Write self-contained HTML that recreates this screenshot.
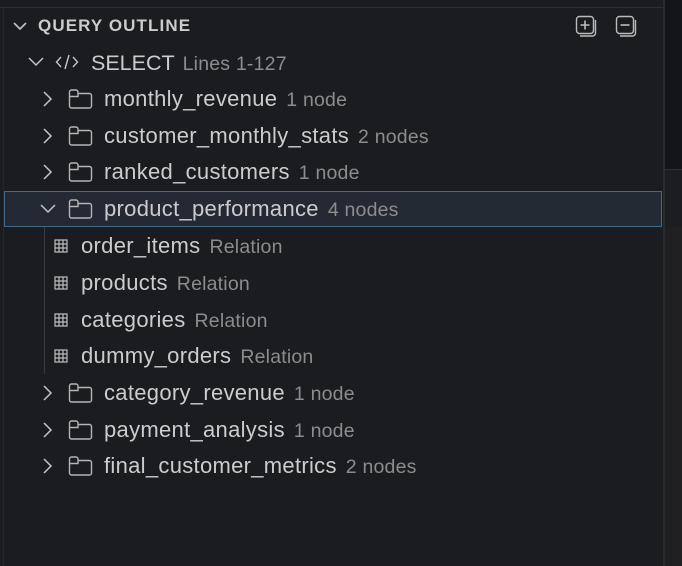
<!DOCTYPE html>
<html><head><style>
body{margin:0;width:682px;height:566px;background:#1b1c1f;overflow:hidden;position:relative;font-family:"Liberation Sans",sans-serif;}
.a{position:absolute;white-space:nowrap}
.t{color:#cccccc;font-size:22px;line-height:24px;letter-spacing:0.3px}
.s{color:#8c8c8c;font-size:19.5px;margin-left:9px;letter-spacing:0.2px}
svg{position:absolute}
</style></head><body>
<div class="a" style="left:0;top:7px;width:663px;height:1px;background:#2b2c2f"></div>
<div class="a" style="left:3px;top:8px;width:1px;height:558px;background:#26272a"></div>
<div class="a" style="left:663px;top:0;width:2px;height:566px;background:#2a2b2d"></div>
<div class="a" style="left:665px;top:0;width:17px;height:169px;background:#141518"></div>
<div class="a" style="left:665px;top:169px;width:17px;height:1px;background:#2e2f31"></div>
<div class="a" style="left:665px;top:170px;width:17px;height:57px;background:#1c1d20"></div>
<div class="a" style="left:665px;top:227px;width:17px;height:339px;background:#202022"></div>

<svg style="left:12px;top:18px" width="16" height="16"><path d="M2 5 L8 11 L14 5" stroke="#c5c5c5" stroke-width="1.6" fill="none"/></svg>
<div class="a" style="left:38px;top:15px;color:#cccccc;font-weight:bold;font-size:17px;line-height:22px;letter-spacing:1.1px">QUERY OUTLINE</div>
<svg style="left:575px;top:15px" width="24" height="24"><rect x="1.5" y="1.5" width="17" height="17" rx="3" stroke="#bbb" stroke-width="1.4" fill="none"/><path d="M20.5 5 V18 a3 3 0 0 1 -3 3 H5" stroke="#bbb" stroke-width="1.4" fill="none"/><path d="M10 5.5V14.5M5.5 10H14.5" stroke="#bbb" stroke-width="1.6"/></svg>
<svg style="left:615px;top:15px" width="24" height="24"><rect x="1.5" y="1.5" width="17" height="17" rx="3" stroke="#bbb" stroke-width="1.4" fill="none"/><path d="M20.5 5 V18 a3 3 0 0 1 -3 3 H5" stroke="#bbb" stroke-width="1.4" fill="none"/><path d="M5.5 10H14.5" stroke="#bbb" stroke-width="1.6"/></svg>

<svg style="left:27px;top:54px" width="18" height="16"><path d="M2 4 L9 11 L16 4" stroke="#c5c5c5" stroke-width="1.5" fill="none"/></svg>
<svg style="left:55px;top:52px" width="24" height="20"><path d="M6 5 L1.5 10 L6 15 M18 5 L22.5 10 L18 15 M14 3 L10 17" stroke="#c5c5c5" stroke-width="1.4" fill="none"/></svg>
<div class="a t" style="left:91px;top:51px;font-size:21.5px;letter-spacing:0">SELECT<span class="s" style="margin-left:8px">Lines 1-127</span></div>

<div class="a" style="left:4px;top:191px;width:656px;height:34px;background:#232a33;border:1px solid #3c6b8c"></div>
<div class="a" style="left:44px;top:227px;width:1px;height:147px;background:#3a3b3e"></div>

<div id="rows"></div>
<script>
var f=[["monthly_revenue","1 node",99],["customer_monthly_stats","2 nodes",136],["ranked_customers","1 node",172],["product_performance","4 nodes",209,1],["category_revenue","1 node",393],["payment_analysis","1 node",430],["final_customer_metrics","2 nodes",466]];
var h="";
f.forEach(function(r){var y=r[2];
h+= r[3]?'<svg style="left:38px;top:'+(y-8)+'px" width="20" height="16"><path d="M3 4 L10 11 L17 4" stroke="#c5c5c5" stroke-width="1.5" fill="none"/></svg>'
 :'<svg style="left:41px;top:'+(y-9)+'px" width="14" height="18"><path d="M3 2 L10 9 L3 16" stroke="#c5c5c5" stroke-width="1.5" fill="none"/></svg>';
h+='<svg style="left:68px;top:'+(y-11)+'px" width="26" height="22"><path d="M1.5 4 a2 2 0 0 1 2-2 H8 a2 2 0 0 1 2 2 V5.5 H21.5 a2 2 0 0 1 2 2 V18 a2 2 0 0 1 -2 2 H3.5 a2 2 0 0 1 -2-2 Z M1.5 8.5 H10 V5.5" stroke="#b5b5b5" stroke-width="1.4" fill="none"/></svg>';
h+='<div class="a t" style="left:104px;top:'+(y-12)+'px">'+r[0]+'<span class="s">'+r[1]+'</span></div>';});
[["order_items",246],["products",283],["categories",320],["dummy_orders",356]].forEach(function(r){var y=r[1];
h+='<svg style="left:54px;top:'+(y-7)+'px" width="14" height="14"><path d="M1 1H13V13H1Z M1 5H13 M1 9H13 M5 1V13 M9 1V13" stroke="#bdbdbd" stroke-width="1.2" fill="none"/></svg>';
h+='<div class="a t" style="left:81px;top:'+(y-12)+'px">'+r[0]+'<span class="s">Relation</span></div>';});
document.getElementById("rows").innerHTML=h;
</script>
</body></html>
